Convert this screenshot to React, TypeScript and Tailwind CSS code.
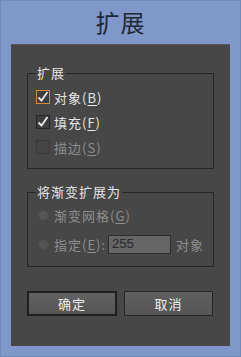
import React from "react";

const font = { fontFamily: '"Noto Sans CJK SC", "Liberation Sans", sans-serif' };

function Check({ checked, focus, disabled }: { checked?: boolean; focus?: boolean; disabled?: boolean }) {
  return (
    <div
      className={
        "w-[14px] h-[14px] flex items-center justify-center border " +
        (focus
          ? "border-[#d68a3c] bg-[#3d3d3d]"
          : disabled
          ? "border-[#383838] bg-[#454545]"
          : "border-[#262626] bg-[#3d3d3d]")
      }
    >
      {checked && (
        <svg width="12" height="12" viewBox="0 0 12 12">
          <path d="M1.5 6.5 L4.5 9.5 L10.5 1" fill="none" stroke="#e8e8e8" strokeWidth="1.8" />
        </svg>
      )}
    </div>
  );
}

function Radio() {
  return <div className="w-[11px] h-[11px] rounded-full bg-[#555555] border border-[#4a4a4a]" />;
}

function Label({ main, k, disabled }: { main: string; k: string; disabled?: boolean }) {
  return (
    <span className={"text-[13px] leading-none tracking-[1px] " + (disabled ? "text-[#8e8e8e]" : "text-[#e6e6e6]")}>
      {main}(<span className="underline underline-offset-2">{k}</span>)
    </span>
  );
}

export default function App() {
  return (
    <div className="w-[241px] h-[357px] bg-[#7f98c9] flex flex-col border border-[#7089b9]" style={font}>
      <div className="h-[43px] flex items-center justify-center text-[24px] leading-none text-[#1e2838] pb-[2px] tracking-[1px]">
        扩展
      </div>
      <div className="mx-[10px] h-[302px] bg-[#474747] border-t border-[#595959] flex flex-col px-[16px] pt-[28px]">
        <div className="relative h-[96px] border border-[#262626] flex flex-col pl-[8px] pt-[16px] gap-[11px]">
          <div className="absolute left-[8px] top-[-9px] bg-[#474747] px-[1px] text-[13px] leading-[16px] text-[#e6e6e6] tracking-[1px]">
            扩展
          </div>
          <div className="flex items-center gap-[4px] h-[14px]">
            <Check checked focus />
            <Label main="对象" k="B" />
          </div>
          <div className="flex items-center gap-[4px] h-[14px]">
            <Check checked />
            <Label main="填充" k="F" />
          </div>
          <div className="flex items-center gap-[4px] h-[14px]">
            <Check disabled />
            <Label main="描边" k="S" disabled />
          </div>
        </div>
        <div className="relative mt-[23px] h-[75px] border border-[#262626] flex flex-col pl-[10px] pt-[15px] gap-[15px]">
          <div className="absolute left-[8px] top-[-9px] bg-[#474747] px-[1px] text-[13px] leading-[16px] text-[#e6e6e6] tracking-[1px]">
            将渐变扩展为
          </div>
          <div className="flex items-center gap-[5px] h-[14px]">
            <Radio />
            <Label main="渐变网格" k="G" disabled />
          </div>
          <div className="flex items-center gap-[5px] h-[14px]">
            <Radio />
            <span className="text-[13px] leading-none text-[#8e8e8e] tracking-[1px]">
              指定(<span className="underline underline-offset-2">E</span>):
            </span>
            <div
              className="ml-[-3px] w-[63px] h-[19px] bg-[#666666] border border-[#2e2e2e] flex items-center pl-[3px] text-[13px] text-[#262626]"
              style={{ fontFamily: '"Liberation Sans", sans-serif' }}
            >
              255
            </div>
            <span className="text-[13px] leading-none text-[#8e8e8e] tracking-[1px]">对象</span>
          </div>
        </div>
        <div className="mt-[24px] flex gap-[7px]">
          <div className="w-[90px] h-[25px] border-2 border-[#1f1f1f] bg-gradient-to-b from-[#626262] to-[#555555] flex items-center justify-center text-[13px] text-[#ececec] tracking-[1px]">
            确定
          </div>
          <div className="w-[89px] h-[25px] border border-[#262626] bg-gradient-to-b from-[#606060] to-[#555555] flex items-center justify-center text-[13px] text-[#ececec] tracking-[1px]">
            取消
          </div>
        </div>
      </div>
    </div>
  );
}
